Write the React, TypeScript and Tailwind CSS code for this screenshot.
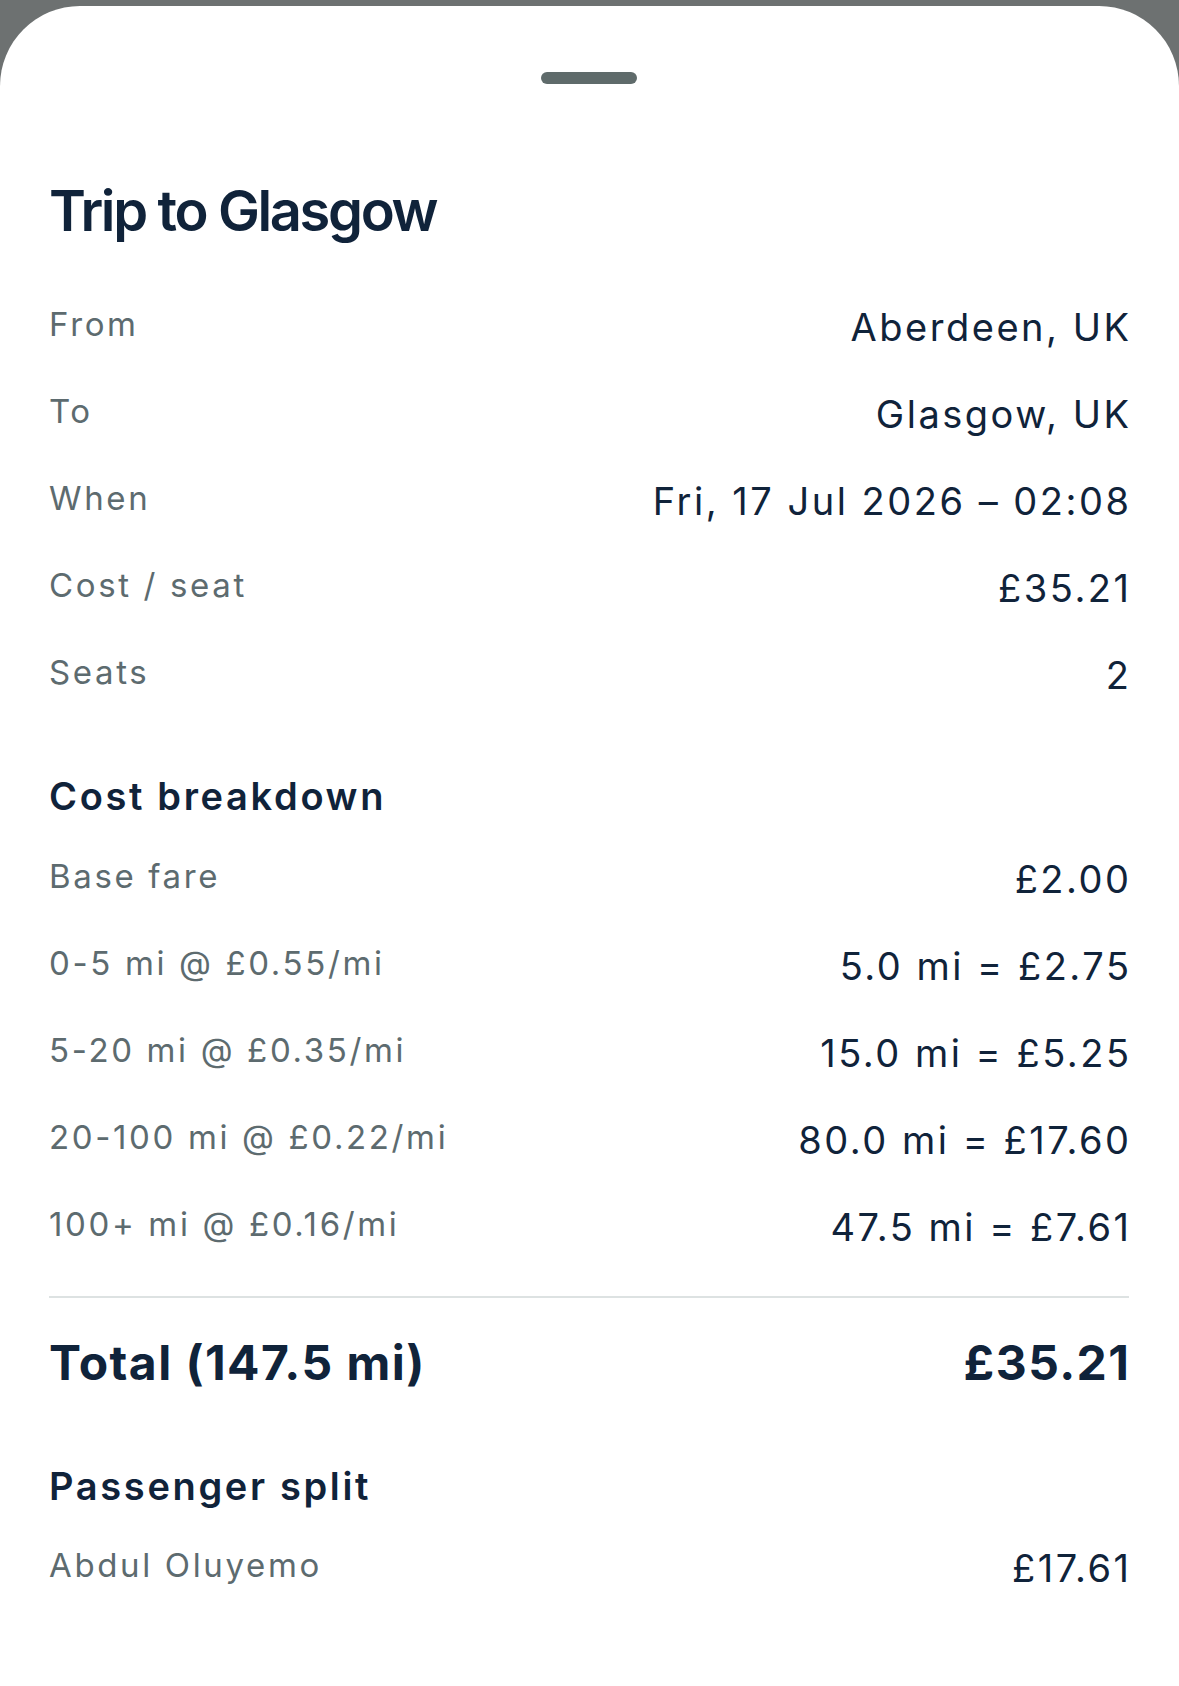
const font = { fontFamily: "Inter, 'Noto Sans', sans-serif" };

type Row = { label: string; value: string };

const tripRows: Row[] = [
  { label: "From", value: "Aberdeen, UK" },
  { label: "To", value: "Glasgow, UK" },
  { label: "When", value: "Fri, 17 Jul 2026 – 02:08" },
  { label: "Cost / seat", value: "£35.21" },
  { label: "Seats", value: "2" },
];

const breakdownRows: Row[] = [
  { label: "Base fare", value: "£2.00" },
  { label: "0-5 mi @ £0.55/mi", value: "5.0 mi = £2.75" },
  { label: "5-20 mi @ £0.35/mi", value: "15.0 mi = £5.25" },
  { label: "20-100 mi @ £0.22/mi", value: "80.0 mi = £17.60" },
  { label: "100+ mi @ £0.16/mi", value: "47.5 mi = £7.61" },
];

function DetailRow({ label, value }: Row) {
  return (
    <div className="flex h-[87px] items-start justify-between">
      <span className="text-[33px] leading-[40px] tracking-[0.08em] text-[#5d6b6f]">{label}</span>
      <span className="-mr-[0.066em] text-[38px] leading-[46px] tracking-[0.066em] text-[#10233a]">{value}</span>
    </div>
  );
}

export default function App() {
  return (
    <div className="min-h-[1686px] bg-[#6d7171] pt-[6px]" style={font}>
      <div className="h-[1680px] rounded-t-[80px] bg-white pl-[49px] pr-[50px] pt-[66px]">
        {/* Grabber */}
        <div className="mx-auto h-[12px] w-[96px] rounded-full bg-[#5f6b6b]" />

        <h1 className="mt-[95px] text-[56px] font-semibold leading-[64px] tracking-[-0.042em] text-[#10233a]">
          Trip to Glasgow
        </h1>

        <div className="mt-[61px]">
          {tripRows.map(r => (
            <DetailRow key={r.label} {...r} />
          ))}
        </div>

        <h2 className="mt-[34px] text-[38px] font-semibold leading-[46px] tracking-[0.07em] text-[#10233a]">
          Cost breakdown
        </h2>

        <div className="mt-[37px]">
          {breakdownRows.map(r => (
            <DetailRow key={r.label} {...r} />
          ))}
        </div>

        <div className="mt-[5px] h-[2px] bg-[#dde2e2]" />

        <div className="mt-[37px] flex items-start justify-between text-[48px] font-bold leading-[56px] tracking-[0.03em] text-[#10233a]">
          <span>Total (147.5 mi)</span>
          <span className="-mr-[0.03em]">£35.21</span>
        </div>

        <h2 className="mt-[72px] text-[38px] font-semibold leading-[46px] tracking-[0.07em] text-[#10233a]">
          Passenger split
        </h2>

        <div className="mt-[36px]">
          <DetailRow label="Abdul Oluyemo" value="£17.61" />
        </div>
      </div>
    </div>
  );
}
